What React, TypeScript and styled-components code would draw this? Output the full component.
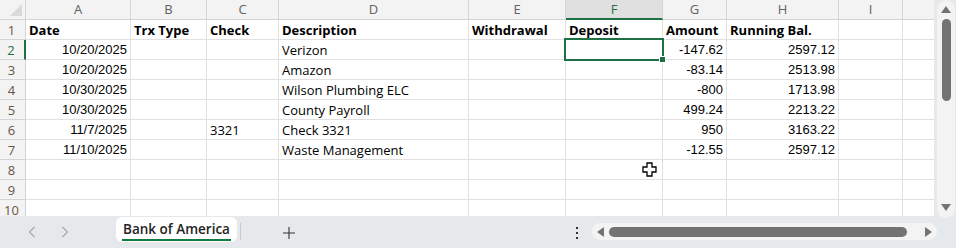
import React from "react";
import styled, { createGlobalStyle, css } from "styled-components";

const GREEN = "#1e7145";
const GRID = "#e1e1e1";

const GlobalStyle = createGlobalStyle`
  html, body { margin: 0; padding: 0; background: #fff; }
  body { width: 956px; height: 248px; overflow: hidden; }
`;

type Cell = { v: string; num?: boolean; bold?: boolean };

const COLS = ["A", "B", "C", "D", "E", "F", "G", "H", "I", ""];
const WIDTHS = [105, 76, 72, 190, 97, 97, 64, 112, 64, 32];

const HEAD: Cell[] = ["Date", "Trx Type", "Check", "Description", "Withdrawal", "Deposit", "Amount", "Running Bal.", "", ""].map(
	(v) => ({ v, bold: true })
);

const rowsData: string[][] = [
	["10/20/2025", "", "", "Verizon", "", "", "-147.62", "2597.12"],
	["10/20/2025", "", "", "Amazon", "", "", "-83.14", "2513.98"],
	["10/30/2025", "", "", "Wilson Plumbing ELC", "", "", "-800", "1713.98"],
	["10/30/2025", "", "", "County Payroll", "", "", "499.24", "2213.22"],
	["11/7/2025", "", "3321", "Check 3321", "", "", "950", "3163.22"],
	["11/10/2025", "", "", "Waste Management", "", "", "-12.55", "2597.12"],
];

const NUM_COLS = [0, 6, 7];

const buildRows = (): Cell[][] => {
	const out: Cell[][] = [HEAD];
	rowsData.forEach((r) => {
		out.push(COLS.map((_, i) => ({ v: r[i] || "", num: NUM_COLS.includes(i) })));
	});
	for (let i = 0; i < 3; i++) out.push(COLS.map(() => ({ v: "" })));
	return out;
};

const App = () => {
	const rows = buildRows();
	return (
		<>
			<GlobalStyle />
			<Page>
				<SheetArea>
					<Grid>
						<Corner>
							<CornerTri />
						</Corner>
						{COLS.map((c, i) => (
							<ColHead key={i} active={c === "F"} last={i === COLS.length - 1}>
								{c}
							</ColHead>
						))}
						{rows.map((row, r) => (
							<React.Fragment key={r}>
								<RowHead active={r === 1}>{r + 1}</RowHead>
								{row.map((cell, c) => (
									<DataCell key={c} num={cell.num} bold={cell.bold} last={c === COLS.length - 1}>
										{cell.v}
										{r === 1 && c === 5 && (
											<Selection>
												<Handle />
											</Selection>
										)}
									</DataCell>
								))}
							</React.Fragment>
						))}
					</Grid>
					<Cursor width="15" height="15" viewBox="0 0 15 15">
						<path d="M5 1h5v4h4v5h-4v4H5v-4H1V5h4z" fill="#fff" stroke="#000" strokeWidth="1.3" />
					</Cursor>
					<VScroll>
						<VTrack>
							<ArrowUp />
							<VThumb />
							<ArrowDown />
						</VTrack>
					</VScroll>
				</SheetArea>
				<TabBar>
					<NavGroup>
						<svg width="8" height="12" viewBox="0 0 8 12">
							<path d="M6.5 1 1.5 6l5 5" fill="none" stroke="#a3a6a9" strokeWidth="1.2" />
						</svg>
						<svg width="8" height="12" viewBox="0 0 8 12">
							<path d="M1.5 1l5 5-5 5" fill="none" stroke="#a3a6a9" strokeWidth="1.2" />
						</svg>
					</NavGroup>
					<Tab>
						<TabLabel>Bank of America</TabLabel>
					</Tab>
					<Sep />
					<AddBtn width="12" height="12" viewBox="0 0 12 12">
						<path d="M6 0v12M0 6h12" stroke="#333" strokeWidth="1.1" />
					</AddBtn>
					<Spacer />
					<Dots>
						<i />
						<i />
						<i />
					</Dots>
					<HTrack>
						<ArrowLeft />
						<HThumb />
						<ArrowRight />
					</HTrack>
				</TabBar>
			</Page>
		</>
	);
};

const Page = styled.div`
	width: 956px;
	height: 248px;
	display: flex;
	flex-direction: column;
	background: #e6e9ec;
	font-family: "Open Sans", "Noto Sans", sans-serif;
`;

const SheetArea = styled.div`
	position: relative;
	height: 216px;
	display: flex;
	background: #e6e9ec;
`;

const Grid = styled.div`
	width: 934px;
	height: 216px;
	overflow: hidden;
	background: #fff;
	display: grid;
	grid-template-columns: 26px ${WIDTHS.map((w) => w + "px").join(" ")};
	grid-auto-rows: 20px;
	align-content: start;
`;

const Corner = styled.div`
	position: relative;
	background: #f3f3f3;
	border-right: 1px solid #d4d4d4;
	border-bottom: 1px solid #d4d4d4;
`;

const CornerTri = styled.div`
	position: absolute;
	right: 3px;
	bottom: 3px;
	width: 0;
	height: 0;
	border-left: 12px solid transparent;
	border-bottom: 12px solid #dadada;
`;

const ColHead = styled.div<{ active?: boolean; last?: boolean }>`
	background: ${(p) => (p.active ? "#e0e0e0" : "#f3f3f3")};
	color: ${(p) => (p.active ? GREEN : "#616161")};
	border-right: 1px solid ${(p) => (p.last ? "transparent" : "#d4d4d4")};
	border-bottom: ${(p) => (p.active ? `2px solid ${GREEN}` : "1px solid #d4d4d4")};
	font-size: 13px;
	line-height: 19px;
	text-align: center;
	box-sizing: border-box;
`;

const RowHead = styled.div<{ active?: boolean }>`
	background: #f3f3f3;
	color: ${(p) => (p.active ? GREEN : "#6b5440")};
	border-right: ${(p) => (p.active ? `2px solid ${GREEN}` : "1px solid #d4d4d4")};
	border-bottom: 1px solid #d4d4d4;
	font-size: 13px;
	line-height: 20px;
	text-align: center;
	box-sizing: border-box;
	padding-right: 2px;
`;

const DataCell = styled.div<{ num?: boolean; bold?: boolean; last?: boolean }>`
	position: relative;
	border-right: 1px solid ${(p) => (p.last ? "transparent" : GRID)};
	border-bottom: 1px solid ${GRID};
	box-sizing: border-box;
	padding: 0 3px;
	font-size: 13px;
	line-height: 20px;
	color: #000;
	white-space: nowrap;
	${(p) =>
		p.num &&
		css`
			text-align: right;
			font-family: "Liberation Sans", Arial, sans-serif;
		`}
	${(p) =>
		p.bold &&
		css`
			font-weight: 700;
		`}
`;

const Selection = styled.div`
	position: absolute;
	left: -2px;
	top: -2px;
	right: -2px;
	bottom: -2px;
	border: 2px solid ${GREEN};
	z-index: 2;
`;

const Handle = styled.div`
	position: absolute;
	right: -4px;
	bottom: -4px;
	width: 5px;
	height: 5px;
	background: ${GREEN};
	border: 1px solid #fff;
`;

const Cursor = styled.svg`
	position: absolute;
	left: 642px;
	top: 162px;
`;

const VScroll = styled.div`
	width: 22px;
	padding: 0 1px 0 3px;
	box-sizing: border-box;
`;

const VTrack = styled.div`
	height: 218px;
	background: #f3f3f3;
	border-radius: 9px;
	display: flex;
	flex-direction: column;
	align-items: center;
	padding: 4px 0;
	box-sizing: border-box;
`;

const arrow = css`
	width: 0;
	height: 0;
	flex: none;
`;

const ArrowUp = styled.div`
	${arrow};
	border-left: 5px solid transparent;
	border-right: 5px solid transparent;
	border-bottom: 7px solid #737373;
	margin-top: 2px;
`;

const ArrowDown = styled.div`
	${arrow};
	border-left: 5px solid transparent;
	border-right: 5px solid transparent;
	border-top: 7px solid #737373;
	margin-top: auto;
	margin-bottom: 3px;
`;

const VThumb = styled.div`
	width: 9px;
	height: 82px;
	margin-top: 6px;
	background: #737373;
	border-radius: 5px;
`;

const TabBar = styled.div`
	height: 32px;
	display: flex;
	align-items: flex-start;
	padding-top: 1px;
	box-sizing: border-box;
`;

const NavGroup = styled.div`
	width: 116px;
	display: flex;
	gap: 25px;
	padding: 9px 0 0 28px;
	box-sizing: border-box;
`;

const Tab = styled.div`
	width: 121px;
	height: 25px;
	background: #fff;
	border-radius: 6px;
	display: flex;
	justify-content: center;
	align-items: flex-start;
	box-sizing: border-box;
	padding-top: 3px;
`;

const TabLabel = styled.span`
	font-size: 13.5px;
	font-weight: 600;
	color: #242424;
	line-height: 18px;
	border-bottom: 2px solid #107c41;
	padding: 0 1px 1px;
`;

const Sep = styled.div`
	width: 1px;
	height: 17px;
	background: #c8c8c8;
	margin: 6px 0 0 3px;
`;

const AddBtn = styled.svg`
	margin: 10px 0 0 42px;
`;

const Spacer = styled.div`
	flex: 1;
`;

const Dots = styled.div`
	display: flex;
	flex-direction: column;
	gap: 3px;
	padding-top: 10px;
	margin-right: 14px;
	i {
		display: block;
		width: 2px;
		height: 2px;
		background: #333;
	}
`;

const HTrack = styled.div`
	width: 345px;
	height: 17px;
	margin: 6px 19px 0 0;
	background: #f3f3f3;
	border-radius: 9px;
	display: flex;
	align-items: center;
	padding: 0 5px;
	box-sizing: border-box;
`;

const ArrowLeft = styled.div`
	${arrow};
	border-top: 5px solid transparent;
	border-bottom: 5px solid transparent;
	border-right: 7px solid #737373;
`;

const ArrowRight = styled.div`
	${arrow};
	border-top: 5px solid transparent;
	border-bottom: 5px solid transparent;
	border-left: 7px solid #737373;
	margin-left: auto;
`;

const HThumb = styled.div`
	width: 298px;
	height: 10px;
	margin-left: 5px;
	background: #737373;
	border-radius: 5px;
`;

export default App;
